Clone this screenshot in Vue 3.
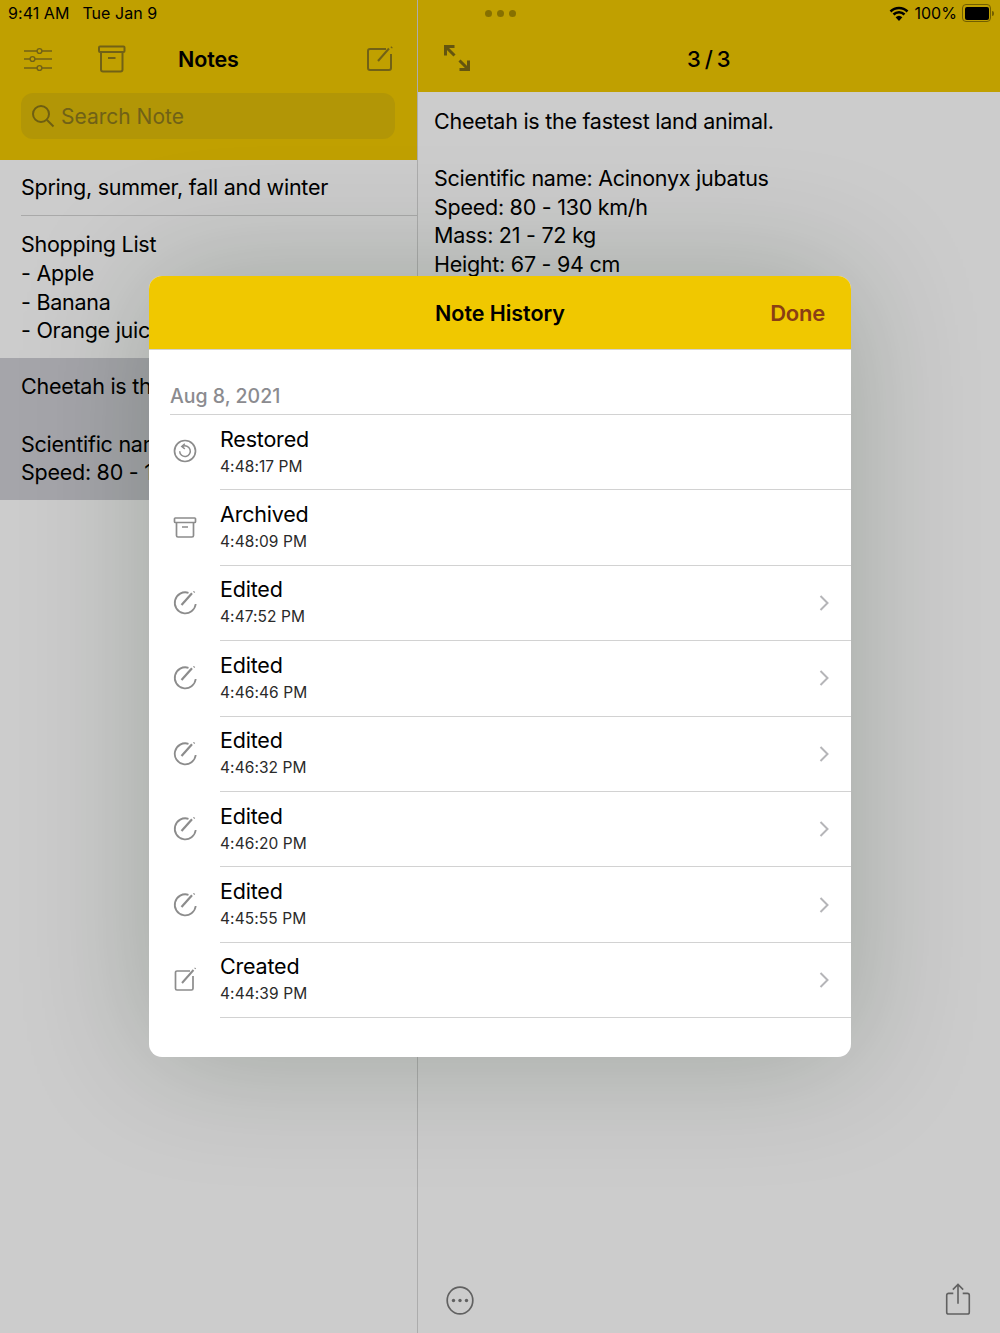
<script setup>
const rows = [
  { title: 'Restored', time: '4:48:17 PM', icon: 'restored' },
  { title: 'Archived', time: '4:48:09 PM', icon: 'archived' },
  { title: 'Edited', time: '4:47:52 PM', icon: 'edited', more: true },
  { title: 'Edited', time: '4:46:46 PM', icon: 'edited', more: true },
  { title: 'Edited', time: '4:46:32 PM', icon: 'edited', more: true },
  { title: 'Edited', time: '4:46:20 PM', icon: 'edited', more: true },
  { title: 'Edited', time: '4:45:55 PM', icon: 'edited', more: true },
  { title: 'Created', time: '4:44:39 PM', icon: 'created', more: true },
]
</script>

<template>
  <div class="page">
    <div class="sidebar">
      <div class="bar bar-left">
        <div class="status">
          <span>9:41 AM</span>
          <span>Tue Jan 9</span>
        </div>
        <div class="nav">
          <svg class="tool" width="30" height="26" viewBox="0 0 30 26" fill="none" stroke="#8e7a1c" stroke-width="1.4">
            <path d="M1 5h13M19 5h10M1 13h6M12 13h17M1 22h13M19 22h10" />
            <circle cx="16.5" cy="5" r="2.4" />
            <circle cx="9.5" cy="13" r="2.4" />
            <circle cx="16.5" cy="22" r="2.4" />
          </svg>
          <svg class="tool archive" width="28" height="28" viewBox="0 0 28 28" fill="none" stroke="#8e7a1c" stroke-width="2">
            <rect x="1" y="1.5" width="25.5" height="5.5" rx="1" />
            <path d="M3 7v17.5a2 2 0 0 0 2 2h17.500a2 2 0 0 0 2-2V7M10 13h7.500" />
          </svg>
          <span class="nav-title">Notes</span>
          <svg class="tool" width="28" height="30" viewBox="0 0 28 30" fill="none" stroke="#8e7a1c" stroke-width="2">
            <path d="M20 5H4a2 2 0 0 0-2 2v17a2 2 0 0 0 2 2h19a2 2 0 0 0 2-2V10" />
            <path d="M12 17 23 4.500" />
            <path d="m26 3-.8.9" />
          </svg>
        </div>
        <div class="search">
          <svg width="24" height="24" viewBox="0 0 24 24" fill="none" stroke="#8a7617" stroke-width="2">
            <circle cx="10" cy="10" r="8" />
            <path d="m16 16 6.500 6.500" />
          </svg>
          <span>Search Note</span>
        </div>
      </div>
      <div class="list">
        <div class="note note-single">
          <div class="note-text">Spring, summer, fall and winter</div>
          <div class="note-rule"></div>
        </div>
        <div class="note note-multi">
          <div class="note-text">Shopping List</div>
          <div class="note-text">- Apple</div>
          <div class="note-text">- Banana</div>
          <div class="note-text">- Orange juice</div>
        </div>
        <div class="note note-picked">
          <div class="note-text">Cheetah is the fastest land animal.</div>
          <div class="note-text">&nbsp;</div>
          <div class="note-text">Scientific name: Acinonyx jubatus</div>
          <div class="note-text">Speed: 80 - 130 km/h</div>
        </div>
      </div>
    </div>

    <div class="detail">
      <div class="bar bar-right">
        <div class="status status-right">
          <span class="grip"><i></i><i></i><i></i></span>
          <span class="status-icons">
            <svg width="20" height="15" viewBox="0 0 20 15" fill="none" stroke="#000" stroke-width="2.500">
              <path d="M1.500 5.500a12 12 0 0 1 17 0M4.500 8.500a7.800 7.800 0 0 1 11 0" />
              <path d="m10 15-3.400-3.700a5 5 0 0 1 6.800 0z" fill="#000" stroke="none" />
            </svg>
            <span>100%</span>
            <span class="battery"><b></b></span>
            <span class="battery-tip"></span>
          </span>
        </div>
        <div class="nav nav-right">
          <svg class="expand" width="28" height="28" viewBox="0 0 28 28" fill="none" stroke="#7d6b14" stroke-width="3">
            <path d="M2.500 11.500V2.500h9M3 3l8.500 8.500M25.500 16.500v9h-9M25 25l-8.500-8.500" />
          </svg>
          <span class="counter">3 / 3</span>
        </div>
      </div>
      <div class="body">
        <p>Cheetah is the fastest land animal.</p>
        <p>&nbsp;</p>
        <p>Scientific name: Acinonyx jubatus</p>
        <p>Speed: 80 - 130 km/h</p>
        <p>Mass: 21 - 72 kg</p>
        <p>Height: 67 - 94 cm</p>
      </div>
      <div class="toolbar">
        <svg width="28" height="29" viewBox="0 0 28 29" fill="none" stroke="#7a7a7a" stroke-width="1.700">
          <ellipse cx="14" cy="14.500" rx="12.800" ry="13.400" />
          <circle cx="7.500" cy="14.500" r="1.700" fill="#7a7a7a" stroke="none" />
          <circle cx="14" cy="14.500" r="1.700" fill="#7a7a7a" stroke="none" />
          <circle cx="20.500" cy="14.500" r="1.700" fill="#7a7a7a" stroke="none" />
        </svg>
        <svg width="26" height="32" viewBox="0 0 26 34" fill="none" stroke="#7a7a7a" stroke-width="1.700">
          <path d="M8 11H3a2 2 0 0 0-2 2v18a2 2 0 0 0 2 2h20a2 2 0 0 0 2-2V13a2 2 0 0 0-2-2h-5" />
          <path d="M13 22V1.500M7.500 7 13 1.500 18.500 7" />
        </svg>
      </div>
    </div>

    <div class="dim"></div>

    <div class="sheet">
      <div class="sheet-head">
        <span class="sheet-title">Note History</span>
        <span class="done">Done</span>
      </div>
      <div class="sheet-body">
        <div class="date"><div class="date-text">Aug 8, 2021</div></div>
        <div v-for="r in rows" :key="r.time" class="row">
          <div class="row-icon">
            <svg v-if="r.icon === 'restored'" width="24" height="24" viewBox="0 0 24 24" fill="none" stroke="#8c8c8c" stroke-width="1.700">
              <circle cx="12" cy="12" r="10.500" />
              <path d="M9.500 7.500a5.300 5.300 0 1 1-2.800 4.700" stroke-width="1.500" />
              <path d="M11.800 4.700 8.800 7.500l3 2.300" stroke-width="1.500" />
            </svg>
            <svg v-else-if="r.icon === 'archived'" width="24" height="24" viewBox="0 0 24 24" fill="none" stroke="#8c8c8c" stroke-width="1.700">
              <rect x="1.500" y="3" width="21" height="4.500" rx=".8" />
              <path d="M3.500 7.500v13a1.500 1.500 0 0 0 1.500 1.500h14a1.500 1.500 0 0 0 1.500-1.500v-13M9 12h6" />
            </svg>
            <svg v-else-if="r.icon === 'edited'" width="26" height="26" viewBox="0 0 26 26" fill="none" stroke="#8c8c8c" stroke-width="1.800">
              <path d="M16.500 3.800A10.500 10.500 0 1 0 23.700 15" />
              <path d="M9.500 16 20 4.200" stroke-width="2.200" />
              <path d="m22.500 2.500-.8.9" />
            </svg>
            <svg v-else width="24" height="24" viewBox="0 0 24 24" fill="none" stroke="#8c8c8c" stroke-width="1.700">
              <path d="M17 4H4a1.500 1.500 0 0 0-1.500 1.500v16A1.500 1.500 0 0 0 4 23h14.500a1.500 1.500 0 0 0 1.500-1.500V9" />
              <path d="M9 16 20.500 3" stroke-width="2" />
              <path d="m22.500 1-.7.800" />
            </svg>
          </div>
          <div class="row-main">
            <div class="row-text">
              <div class="row-title">{{ r.title }}</div>
              <div class="row-time">{{ r.time }}</div>
            </div>
            <svg v-if="r.more" class="chevron" width="10" height="16" viewBox="0 0 10 16" fill="none" stroke="#b5b5b8" stroke-width="2">
              <path d="m1.500 1 7 7-7 7" />
            </svg>
          </div>
        </div>
      </div>
    </div>
  </div>
</template>

<style>
html, body { margin: 0; }
</style>

<style scoped>
.page {
  position: relative; display: flex;
  width: 1000px; height: 1333px; overflow: hidden;
  background: #fff; color: #000;
  font-family: Inter, "Liberation Sans", sans-serif;
}
.sidebar { width: 417px; flex-shrink: 0; border-right: 1px solid #d8d8d8; }
.detail { flex: 1; display: flex; flex-direction: column; min-width: 0; }
.bar { background: #f0c800; }
.bar-left { height: 160px; box-sizing: border-box; }
.bar-right { height: 92px; box-sizing: border-box; }

.status {
  display: flex; gap: 13px; height: 26px; align-items: center;
  padding: 0 8px; font-size: 16px; letter-spacing: .05px;
}
.status-right { position: relative; justify-content: flex-end; gap: 0; padding: 0 6px 0 0; }
.grip { position: absolute; left: 67px; top: 10px; display: flex; gap: 5px; }
.grip i { width: 7px; height: 7px; border-radius: 50%; background: #a88c00; }
.status-icons { display: flex; align-items: center; gap: 5px; }
.battery {
  width: 24px; height: 13px; padding: 1.500px; box-sizing: content-box;
  border: 1px solid #8e7600; border-radius: 4px; display: flex;
}
.battery b { flex: 1; background: #000; border-radius: 2px; }
.battery-tip { width: 2px; height: 5px; margin-left: -4px; background: #8e7600; border-radius: 0 2px 2px 0; }

.nav { display: flex; align-items: center; height: 66px; position: relative; padding: 0 23px; }
.nav-title { margin-left: 52px; font-size: 21.500px; font-weight: 600; letter-spacing: -.1px; }
.tool { flex-shrink: 0; }
.archive { margin-left: 45px; }
.nav-title + .tool { margin-left: auto; }
.nav-right { padding: 0 0 0 25px; }
.expand { flex-shrink: 0; margin-top: -2px; }
.counter { margin-left: 216px; font-size: 22px; font-weight: 500; word-spacing: -2px; }

.search {
  display: flex; align-items: center; gap: 6px;
  margin: 1px 22px 0 21px; height: 46px; padding: 0 10px;
  background: #dfbc08; border-radius: 12px;
  color: #8d7a1d; font-size: 21px;
}

.list { background: #fff; }
.note { padding-left: 21px; position: relative; overflow: hidden; box-sizing: border-box; }
.note-single { height: 56px; padding-top: 13px; }
.note-rule { position: absolute; left: 21px; right: 0; bottom: 0; height: 1px; background: #d4d4d4; }
.note-multi { height: 142px; padding-top: 14px; }
.note-picked { height: 142px; background: #cfcfd5; padding-top: 14px; }
.note-text { font-size: 21.500px; line-height: 28.800px; letter-spacing: -.26px; white-space: nowrap; }

.body { flex: 1; padding: 14.500px 16px 0; }
.body p { margin: 0; font-size: 21.500px; line-height: 28.700px; letter-spacing: -.26px; white-space: nowrap; }
.toolbar {
  display: flex; justify-content: space-between; align-items: flex-end;
  padding: 0 29px 18px 28px;
}

.dim { position: absolute; inset: 0; background: rgba(0, 0, 0, .2); }

.sheet {
  position: absolute; left: 149px; top: 276px; width: 702px; height: 781px;
  background: #fff; border-radius: 13px; overflow: hidden;
  box-shadow: 0 0 130px rgba(10, 30, 10, .22);
}
.sheet-head {
  height: 73px; background: #f0c800; border-bottom: 1px solid #d2d2d2;
  display: flex; align-items: center; justify-content: center; position: relative;
}
.sheet-title { font-size: 21.500px; font-weight: 600; letter-spacing: -.05px; }
.done {
  position: absolute; right: 26px; top: 24px;
  font-size: 22px; font-weight: 600; letter-spacing: -.25px; color: #8a3f14;
}
.date { height: 65px; padding-left: 21px; box-sizing: border-box; }
.date-text {
  height: 65px; box-sizing: border-box; padding-top: 33px;
  font-size: 19.500px; line-height: 26px; font-weight: 500; color: #8b8b8f;
  border-bottom: 1px solid #d2d2d2;
}
.row { display: flex; height: 75.400px; }
.row-icon {
  width: 71px; flex-shrink: 0; display: flex; align-items: center; justify-content: center;
  padding-bottom: 3px; box-sizing: border-box;
}
.row-main {
  flex: 1; display: flex; align-items: center; justify-content: space-between;
  border-bottom: 1px solid #d2d2d2; padding-right: 22px; min-width: 0;
}
.row-text { margin-bottom: 2px; }
.row-title { font-size: 21.500px; line-height: 28px; letter-spacing: -.2px; }
.row-time { font-size: 15.500px; line-height: 22px; margin-top: 3px; letter-spacing: .08px; color: #2a2a2a; }
</style>
